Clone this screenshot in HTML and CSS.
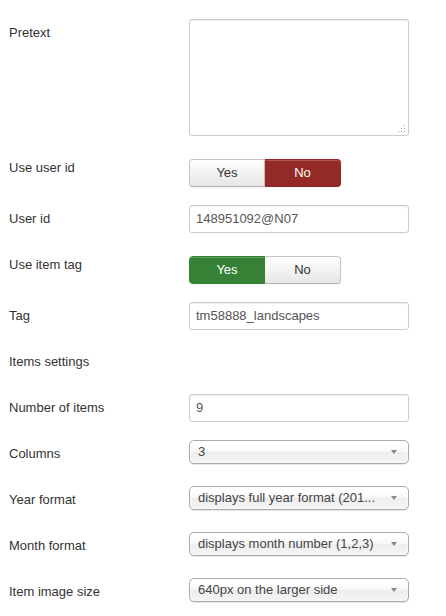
FILE: index.html
```html
<!DOCTYPE html>
<html>
<head>
<meta charset="utf-8">
<link rel="stylesheet" href="styles.css">
</head>
<body>
<div class="form">
  <div class="control-group">
    <div class="control-label">Pretext</div>
    <div class="controls">
      <div class="textarea-wrap">
        <textarea class="textarea"></textarea>
        <svg class="grip" width="9" height="9" viewBox="0 0 9 9">
          <rect x="7" y="1" width="1" height="1" fill="#999"/>
          <rect x="4" y="4" width="1" height="1" fill="#999"/>
          <rect x="7" y="4" width="1" height="1" fill="#999"/>
          <rect x="1" y="7" width="1" height="1" fill="#999"/>
          <rect x="4" y="7" width="1" height="1" fill="#999"/>
          <rect x="7" y="7" width="1" height="1" fill="#999"/>
        </svg>
      </div>
    </div>
  </div>
  <div class="control-group">
    <div class="control-label">Use user id</div>
    <div class="controls radio-controls">
      <div class="btn-group">
        <span class="btn first">Yes</span><span class="btn last active-no">No</span>
      </div>
    </div>
  </div>
  <div class="control-group">
    <div class="control-label">User id</div>
    <div class="controls"><div class="input">148951092@N07</div></div>
  </div>
  <div class="control-group">
    <div class="control-label">Use item tag</div>
    <div class="controls radio-controls">
      <div class="btn-group">
        <span class="btn first active-yes">Yes</span><span class="btn last">No</span>
      </div>
    </div>
  </div>
  <div class="control-group">
    <div class="control-label">Tag</div>
    <div class="controls"><div class="input">tm58888_landscapes</div></div>
  </div>
  <div class="control-group group-label">
    <div class="control-label">Items settings</div>
  </div>
  <div class="control-group">
    <div class="control-label">Number of items</div>
    <div class="controls"><div class="input">9</div></div>
  </div>
  <div class="control-group">
    <div class="control-label">Columns</div>
    <div class="controls"><div class="chosen"><span class="chosen-text">3</span><b class="arrow"></b></div></div>
  </div>
  <div class="control-group">
    <div class="control-label">Year format</div>
    <div class="controls"><div class="chosen"><span class="chosen-text">displays full year format (201...</span><b class="arrow"></b></div></div>
  </div>
  <div class="control-group">
    <div class="control-label">Month format</div>
    <div class="controls"><div class="chosen"><span class="chosen-text">displays month number (1,2,3)</span><b class="arrow"></b></div></div>
  </div>
  <div class="control-group">
    <div class="control-label">Item image size</div>
    <div class="controls"><div class="chosen"><span class="chosen-text">640px on the larger side</span><b class="arrow"></b></div></div>
  </div>
</div>
</body>
</html>
```
FILE: styles.css
```css
html, body {
  margin: 0;
  padding: 0;
  background: #fff;
}
body {
  font-family: "Liberation Sans", Arial, sans-serif;
  font-size: 13px;
  line-height: 18px;
  color: #333;
}
.form {
  padding: 19px 0 0 9px;
}
.control-group {
  display: flex;
  align-items: flex-start;
  margin-bottom: 18px;
}
.group-label {
  height: 28px;
}
.control-label {
  width: 180px;
  flex: none;
  padding-top: 5px;
}
.controls {
  flex: none;
}
.radio-controls {
  padding-top: 5px;
}
.textarea-wrap {
  position: relative;
  width: 220px;
  height: 117px;
}
.textarea {
  display: block;
  box-sizing: border-box;
  width: 220px;
  height: 117px;
  margin: 0;
  border: 1px solid #ccc;
  border-radius: 3px;
  box-shadow: inset 0 1px 1px rgba(0,0,0,0.075);
  background: #fff;
  resize: none;
}
.grip {
  position: absolute;
  right: 3px;
  bottom: 3px;
}
.input {
  box-sizing: border-box;
  width: 220px;
  height: 28px;
  padding: 4px 6px;
  border: 1px solid #ccc;
  border-radius: 3px;
  box-shadow: inset 0 1px 1px rgba(0,0,0,0.075);
  color: #555;
  line-height: 18px;
}
.btn-group {
  display: flex;
}
.btn {
  box-sizing: border-box;
  width: 76px;
  height: 28px;
  padding: 4px 0;
  text-align: center;
  line-height: 18px;
  color: #333;
  border: 1px solid #c5c5c5;
  border-bottom-color: #b3b3b3;
  background: linear-gradient(to bottom, #ffffff, #e6e6e6);
  box-shadow: inset 0 1px 0 rgba(255,255,255,0.2), 0 1px 2px rgba(0,0,0,0.05);
}
.btn.first {
  border-radius: 4px 0 0 4px;
}
.btn.last {
  border-radius: 0 4px 4px 0;
  border-left: none;
}
.btn.active-no {
  background: #942a25;
  border-color: #942a25;
  color: #fff;
}
.btn.active-yes {
  background: #378137;
  border-color: #378137;
  color: #fff;
}
.chosen {
  position: relative;
  box-sizing: border-box;
  width: 220px;
  height: 24px;
  margin-bottom: 4px;
  padding: 0 26px 0 8px;
  border: 1px solid #aaa;
  border-radius: 5px;
  background: linear-gradient(to bottom, #ffffff 20%, #f6f6f6 50%, #eeeeee 52%, #f4f4f4 100%);
  box-shadow: inset 0 0 3px #fff, 0 1px 1px rgba(0,0,0,0.1);
  color: #444;
  line-height: 22px;
}
.chosen-text {
  display: block;
  white-space: nowrap;
  overflow: hidden;
  text-overflow: ellipsis;
}
.arrow {
  position: absolute;
  right: 11px;
  top: 9px;
  width: 0;
  height: 0;
  border-left: 3px solid transparent;
  border-right: 3px solid transparent;
  border-top: 4px solid #888;
}
```
